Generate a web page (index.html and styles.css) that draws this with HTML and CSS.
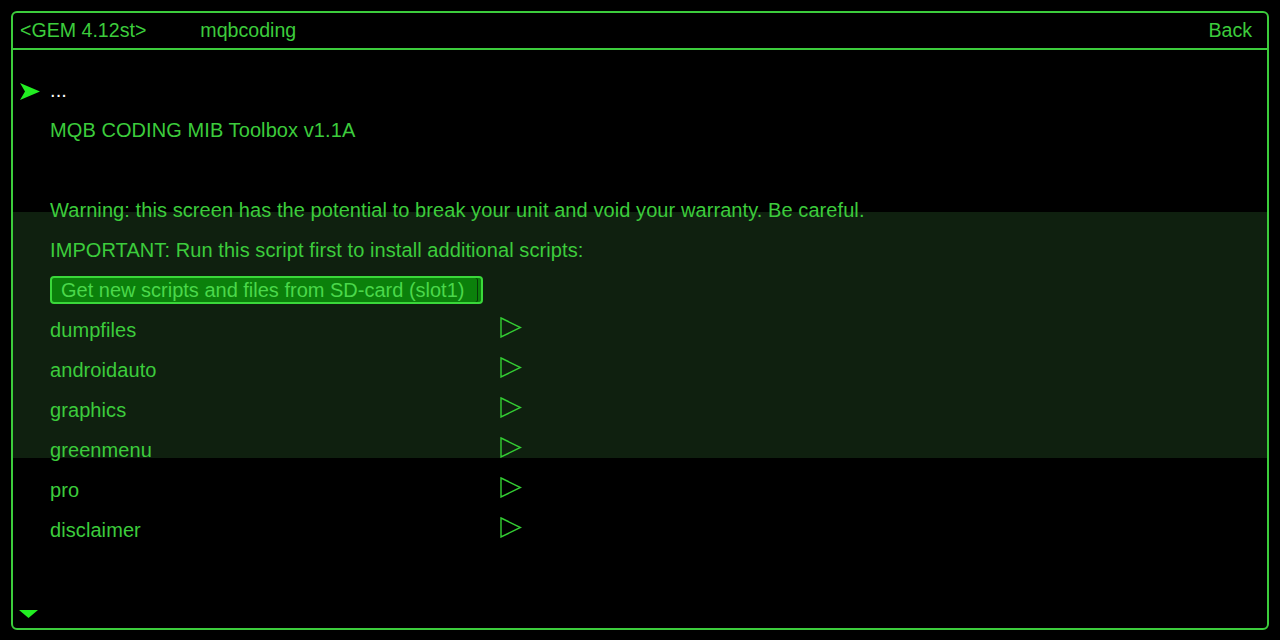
FILE: index.html
```html
<!DOCTYPE html>
<html>
<head>
<meta charset="utf-8">
<link rel="stylesheet" href="styles.css">
</head>
<body>
<div class="frame">
  <div class="band"></div>
  <div class="header">
    <span class="gem">&lt;GEM 4.12st&gt;</span>
    <span class="title">mqbcoding</span>
    <span class="back">Back</span>
  </div>
  <div class="content">
    <div class="row sel">
      <svg class="pointer" width="20" height="17" viewBox="0 0 20 17"><path d="M0 0 L20 8.5 L0 17 L5 8.5 Z" fill="#22ee22"/></svg>
      <span class="white">...</span>
    </div>
    <div class="row">MQB CODING MIB Toolbox v1.1A</div>
    <div class="row"></div>
    <div class="row">Warning: this screen has the potential to break your unit and void your warranty. Be careful.</div>
    <div class="row">IMPORTANT: Run this script first to install additional scripts:</div>
    <div class="row"><div class="btn">Get new scripts and files from SD-card (slot1)</div></div>
    <div class="row item"><span class="name">dumpfiles</span><svg class="play" width="22" height="21" viewBox="0 0 22 21"><path d="M1 1 L20.5 10.5 L1 20 Z" fill="none" stroke="#33cc33" stroke-width="1.4"/></svg></div>
    <div class="row item"><span class="name">androidauto</span><svg class="play" width="22" height="21" viewBox="0 0 22 21"><path d="M1 1 L20.5 10.5 L1 20 Z" fill="none" stroke="#33cc33" stroke-width="1.4"/></svg></div>
    <div class="row item"><span class="name">graphics</span><svg class="play" width="22" height="21" viewBox="0 0 22 21"><path d="M1 1 L20.5 10.5 L1 20 Z" fill="none" stroke="#33cc33" stroke-width="1.4"/></svg></div>
    <div class="row item"><span class="name">greenmenu</span><svg class="play" width="22" height="21" viewBox="0 0 22 21"><path d="M1 1 L20.5 10.5 L1 20 Z" fill="none" stroke="#33cc33" stroke-width="1.4"/></svg></div>
    <div class="row item"><span class="name">pro</span><svg class="play" width="22" height="21" viewBox="0 0 22 21"><path d="M1 1 L20.5 10.5 L1 20 Z" fill="none" stroke="#33cc33" stroke-width="1.4"/></svg></div>
    <div class="row item"><span class="name">disclaimer</span><svg class="play" width="22" height="21" viewBox="0 0 22 21"><path d="M1 1 L20.5 10.5 L1 20 Z" fill="none" stroke="#33cc33" stroke-width="1.4"/></svg></div>
  </div>
  <div class="footer">
    <svg width="19" height="8" viewBox="0 0 19 8"><path d="M0 0 L19 0 L9.5 8 Z" fill="#22ee22"/></svg>
  </div>
</div>
</body>
</html>
```

FILE: styles.css
```css
html, body {
  margin: 0;
  padding: 0;
  background: #000;
  width: 1280px;
  height: 640px;
  overflow: hidden;
  font-family: "Liberation Sans", Arial, sans-serif;
}
.frame {
  position: relative;
  margin: 11px 0 0 11px;
  width: 1254px;
  height: 615px;
  border: 2px solid #3ccc3c;
  border-radius: 6px;
  display: flex;
  flex-direction: column;
  color: #3ccc3c;
  font-size: 20px;
  letter-spacing: 0.08px;
}
.band {
  position: absolute;
  left: 0;
  right: 0;
  top: 199px;
  height: 246px;
  background: #0f200f;
}
.header {
  position: relative;
  height: 35px;
  border-bottom: 2px solid #3ccc3c;
  display: flex;
  align-items: center;
  padding: 0 15px 0 7px;
  font-size: 19.6px;
  letter-spacing: 0;
}
.header .title { margin-left: 54px; }
.header .back { margin-left: auto; }
.content {
  position: relative;
  padding: 20px 0 0 37px;
  flex: 1;
}
.row {
  height: 40px;
  display: flex;
  align-items: center;
  position: relative;
}
.sel .pointer {
  position: absolute;
  left: -30px;
  top: 13px;
}
.white { color: #ffffff; }
.btn {
  box-sizing: border-box;
  width: 433px;
  height: 28px;
  margin-top: -1px;
  border: 2px solid #3ad83a;
  border-radius: 4px;
  background: #0b800b;
  color: #4ad84a;
  padding-left: 9px;
  line-height: 24px;
  letter-spacing: 0;
  box-shadow: inset -3px 0 0 #0b800b, inset -4px 0 0 #073a07;
}
.item .name { width: 450px; }
.item .play { margin-top: -5px; }
.footer {
  position: absolute;
  left: 6px;
  bottom: 10px;
  height: 8px;
}
.footer svg { display: block; }
```
